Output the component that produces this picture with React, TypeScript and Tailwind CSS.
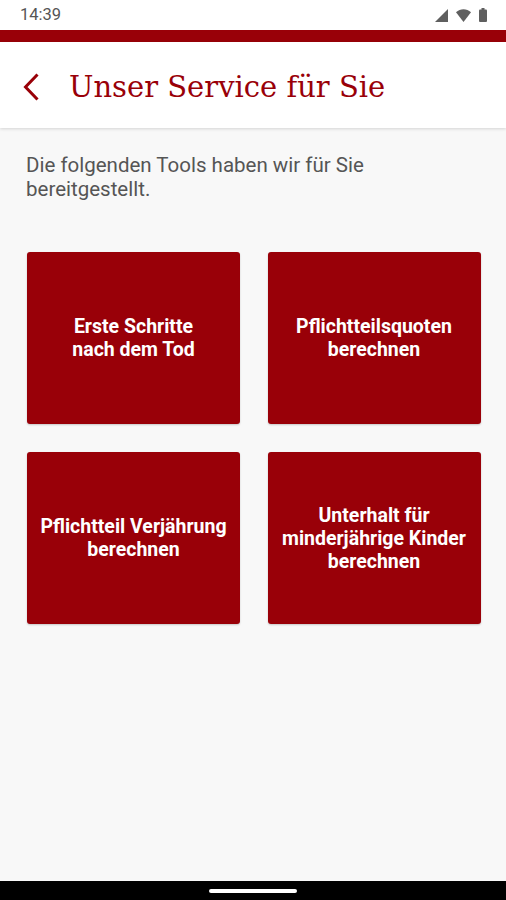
import React from 'react';

const tools = [
  'Erste Schritte\nnach dem Tod',
  'Pflichtteilsquoten\nberechnen',
  'Pflichtteil Verjährung\nberechnen',
  'Unterhalt für\nminderjährige Kinder\nberechnen',
];

function StatusBar() {
  return (
    <div className="flex h-[30px] items-center justify-between bg-white pl-[20px] pr-[19px]">
      <span className="text-[16.5px] text-[#555]" style={{ fontFamily: 'Roboto, sans-serif' }}>
        14:39
      </span>
      <div className="flex items-center gap-[8px]">
        <svg width="13" height="13" viewBox="0 0 13 13">
          <path d="M13 0 L13 13 L0 13 Z" fill="#5f5f5f" />
        </svg>
        <svg width="15" height="13" viewBox="0 0 15 13">
          <path d="M7.5 13 L0 3.2 C4.3 -0.9 10.7 -0.9 15 3.2 Z" fill="#5f5f5f" />
        </svg>
        <svg width="8" height="14" viewBox="0 0 8 14">
          <rect x="2.5" y="0" width="3" height="2" fill="#5f5f5f" />
          <rect x="0" y="1.5" width="8" height="12.5" rx="1" fill="#5f5f5f" />
        </svg>
      </div>
    </div>
  );
}

export default function App() {
  return (
    <div className="flex h-[900px] w-[506px] flex-col overflow-hidden bg-[#f8f8f8]" style={{ fontFamily: 'Roboto, sans-serif' }}>
      <StatusBar />
      <div className="h-[12px] bg-[#990008]" />
      <header className="relative flex h-[86px] items-center bg-white pt-[4px] shadow-[0_1px_3px_rgba(0,0,0,0.15)]">
        <svg className="ml-[22px]" width="18" height="28" viewBox="0 0 18 28">
          <path d="M15.5 1.5 L3.5 14 L15.5 26.5" fill="none" stroke="#990008" strokeWidth="3" />
        </svg>
        <h1
          className="ml-[29px] text-[29px] leading-none text-[#990008]"
          style={{ fontFamily: '"DejaVu Serif", serif' }}
        >
          Unser Service für Sie
        </h1>
      </header>

      <main className="flex-1 px-[26px] pt-[25px]">
        <p className="text-[20.5px] leading-[24px] text-[#555]">
          Die folgenden Tools haben wir für Sie
          <br />
          bereitgestellt.
        </p>
        <div className="mt-[51px] grid grid-cols-2 gap-x-[28px] gap-y-[28px] pl-[1px]">
          {tools.map((t) => (
            <button
              key={t}
              className="flex h-[172px] w-[213px] items-center justify-center rounded-[3px] bg-[#990008] px-2 text-center text-[19.5px] font-bold leading-[23px] text-white whitespace-pre-line shadow-[0_1px_2px_rgba(0,0,0,0.2)]"
            >
              {t}
            </button>
          ))}
        </div>
      </main>

      <div className="flex h-[19px] items-center justify-center bg-black">
        <div className="h-[4px] w-[88px] rounded-full bg-white" />
      </div>
    </div>
  );
}
